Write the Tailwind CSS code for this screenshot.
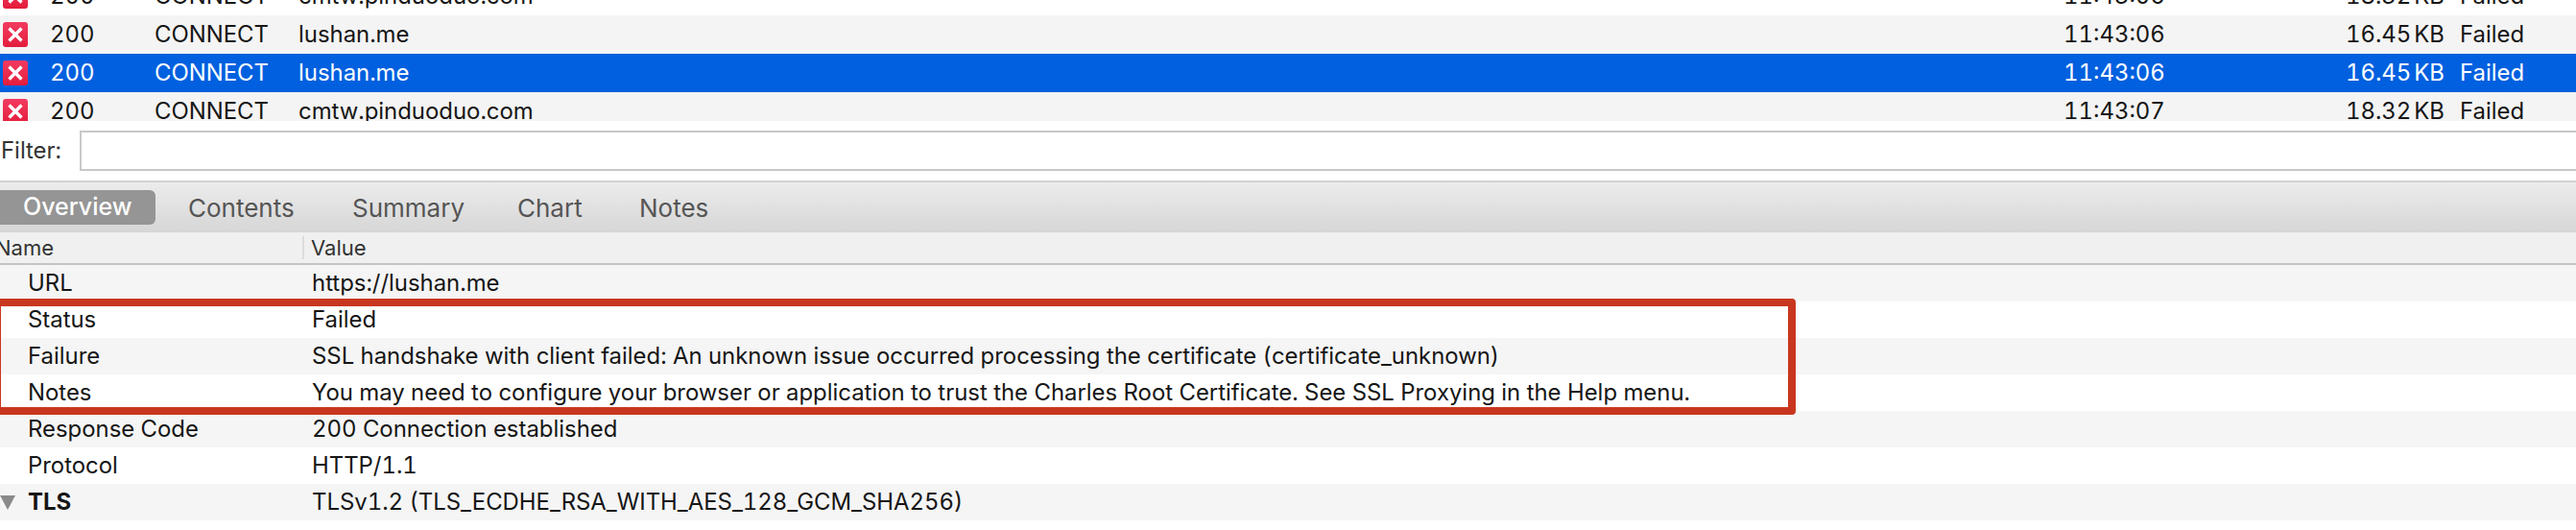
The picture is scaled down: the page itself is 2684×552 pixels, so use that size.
<!DOCTYPE html>
<html lang="en">
<head>
  <meta charset="UTF-8" />
  <title>Charles session</title>
  <script src="https://cdn.jsdelivr.net/npm/@tailwindcss/browser@4"></script>
</head>
<body class="bg-white font-['Inter',sans-serif] text-[23.9px] tabular-nums text-[#161616] overflow-hidden">
<div class="relative w-[2684px] h-[552px] overflow-hidden">

  <!-- request list -->
  <div class="h-[126px] overflow-hidden">
    <div class="-mt-[24px]">
      <div class="flex items-center h-[40px] bg-white">
        <div class="w-[52px] pl-[3px]"><div class="w-[26px] h-[26px] rounded-[3px] bg-gradient-to-b from-[#f23a60] to-[#e41b3c] flex items-center justify-center"><svg width="18" height="18" viewBox="0 0 18 18"><path d="M2.5 2.5L15.5 15.5M15.5 2.5L2.5 15.5" stroke="#fff" stroke-width="3.4"/></svg></div></div>
        <div class="w-[109px]">200</div>
        <div class="w-[150px]">CONNECT</div>
        <div class="w-[1839px]">cmtw.pinduoduo.com</div>
        <div class="w-[100px] text-right">11:43:06</div>
        <div class="w-[297px] text-right">18.32<span class="ml-[3px]">KB</span></div>
        <div class="ml-[16px]">Failed</div>
      </div>
      <div class="flex items-center h-[40px] bg-[#f4f4f4]">
        <div class="w-[52px] pl-[3px]"><div class="w-[26px] h-[26px] rounded-[3px] bg-gradient-to-b from-[#f23a60] to-[#e41b3c] flex items-center justify-center"><svg width="18" height="18" viewBox="0 0 18 18"><path d="M2.5 2.5L15.5 15.5M15.5 2.5L2.5 15.5" stroke="#fff" stroke-width="3.4"/></svg></div></div>
        <div class="w-[109px]">200</div>
        <div class="w-[150px]">CONNECT</div>
        <div class="w-[1839px]">lushan.me</div>
        <div class="w-[100px] text-right">11:43:06</div>
        <div class="w-[297px] text-right">16.45<span class="ml-[3px]">KB</span></div>
        <div class="ml-[16px]">Failed</div>
      </div>
      <div class="flex items-center h-[40px] bg-[#0060df] text-white">
        <div class="w-[52px] pl-[3px]"><div class="w-[26px] h-[26px] rounded-[3px] bg-gradient-to-b from-[#f23a60] to-[#e41b3c] flex items-center justify-center"><svg width="18" height="18" viewBox="0 0 18 18"><path d="M2.5 2.5L15.5 15.5M15.5 2.5L2.5 15.5" stroke="#fff" stroke-width="3.4"/></svg></div></div>
        <div class="w-[109px]">200</div>
        <div class="w-[150px]">CONNECT</div>
        <div class="w-[1839px]">lushan.me</div>
        <div class="w-[100px] text-right">11:43:06</div>
        <div class="w-[297px] text-right">16.45<span class="ml-[3px]">KB</span></div>
        <div class="ml-[16px]">Failed</div>
      </div>
      <div class="flex items-center h-[40px] bg-[#f4f4f4]">
        <div class="w-[52px] pl-[3px]"><div class="w-[26px] h-[26px] rounded-[3px] bg-gradient-to-b from-[#f23a60] to-[#e41b3c] flex items-center justify-center"><svg width="18" height="18" viewBox="0 0 18 18"><path d="M2.5 2.5L15.5 15.5M15.5 2.5L2.5 15.5" stroke="#fff" stroke-width="3.4"/></svg></div></div>
        <div class="w-[109px]">200</div>
        <div class="w-[150px]">CONNECT</div>
        <div class="w-[1839px]">cmtw.pinduoduo.com</div>
        <div class="w-[100px] text-right">11:43:07</div>
        <div class="w-[297px] text-right">18.32<span class="ml-[3px]">KB</span></div>
        <div class="ml-[16px]">Failed</div>
      </div>
    </div>
  </div>

  <!-- filter -->
  <div class="flex items-center h-[62px] pb-[1px]">
    <label class="w-[83px] pl-[1px] text-[#333]">Filter:</label>
    <div class="flex-1 h-[42px] border-2 border-r-0 border-[#c8c8c8] bg-white"></div>
  </div>

  <!-- tabs -->
  <div class="flex items-center h-[54px] border-t-2 border-[#d2d2d2] bg-gradient-to-b from-[#ececec] to-[#d6d6d6] text-[26px] text-[#555]">
    <div class="w-[196px]">
      <div class="w-[162px] h-[36px] rounded-r-[6px] bg-[#959595] text-white text-[25px] font-medium pl-[24px] flex items-center">Overview</div>
    </div>
    <div class="w-[171px]">Contents</div>
    <div class="w-[172px]">Summary</div>
    <div class="w-[127px]">Chart</div>
    <div>Notes</div>
  </div>

  <!-- table header -->
  <div class="flex items-center h-[34px] border-b-2 border-[#c4c4c4] bg-[#f0f0f0] text-[22px] text-[#333]">
    <div class="w-[322px] h-[24px] flex items-center border-r-2 border-[#dcdcdc] -ml-[5px]">Name</div>
    <div class="pl-[7px]">Value</div>
  </div>

  <!-- overview rows -->
  <div class="flex items-center h-[38px] bg-[#f5f5f5]"><div class="w-[325px] pl-[29px]">URL</div><div>https://lushan.me</div></div>
  <div class="flex items-center h-[38px] bg-white"><div class="w-[325px] pl-[29px]">Status</div><div>Failed</div></div>
  <div class="flex items-center h-[38px] bg-[#f5f5f5]"><div class="w-[325px] pl-[29px]">Failure</div><div>SSL handshake with client failed: An unknown issue occurred processing the certificate (certificate_unknown)</div></div>
  <div class="flex items-center h-[38px] bg-white"><div class="w-[325px] pl-[29px]">Notes</div><div>You may need to configure your browser or application to trust the Charles Root Certificate. See SSL Proxying in the Help menu.</div></div>
  <div class="flex items-center h-[38px] bg-[#f5f5f5]"><div class="w-[325px] pl-[29px]">Response Code</div><div>200 Connection established</div></div>
  <div class="flex items-center h-[38px] bg-white"><div class="w-[325px] pl-[29px]">Protocol</div><div>HTTP/1.1</div></div>
  <div class="flex items-center h-[38px] bg-[#f5f5f5]">
    <div class="w-[29px]"><svg width="16" height="16" viewBox="0 0 16 16" class="block"><path d="M0 1H16L8 16Z" fill="#8a8a8a"/></svg></div>
    <div class="w-[296px] font-bold">TLS</div>
    <div>TLSv1.2 (TLS_ECDHE_RSA_WITH_AES_128_GCM_SHA256)</div>
  </div>

  <!-- red annotation box -->
  <div class="absolute left-[-7px] top-[311px] w-[1878px] h-[121px] border-[8px] border-[#c9361f] rounded-[4px]"></div>
</div>
</body>
</html>
